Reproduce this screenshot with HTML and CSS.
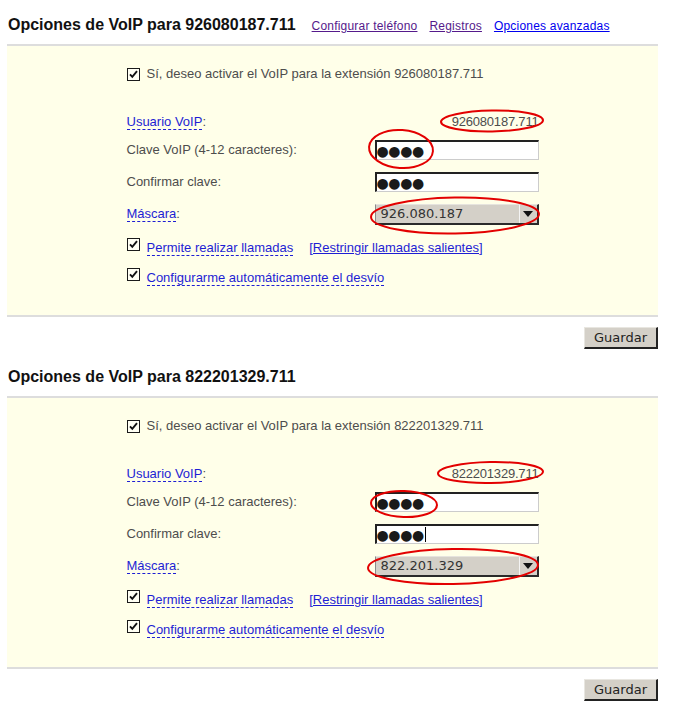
FILE: index.html
```html
<!DOCTYPE html>
<html lang="es">
<head>
<meta charset="utf-8">
<title>Opciones de VoIP</title>
<link rel="stylesheet" href="styles.css">
</head>
<body>
<div class="page">
  <section class="voip">
    <div class="head">
      <h2 class="title">Opciones de VoIP para 926080187.711</h2>
      <nav class="head-links">
        <a class="visited" href="#">Configurar teléfono</a>
        <a class="visited" href="#">Registros</a>
        <a href="#">Opciones avanzadas</a>
      </nav>
    </div>
    <div class="box">
      <div class="form">
        <div class="check-row first">
          <span class="cb"><svg width="13" height="13" viewBox="0 0 13 13"><rect x="0.5" y="0.5" width="12" height="12" fill="#fffff4" stroke="#1a1a1a"/><polyline points="3,6.3 5.3,8.8 10,3.2" fill="none" stroke="#111" stroke-width="1.9"/></svg></span>
          <span class="gray">Sí, deseo activar el VoIP para la extensión 926080187.711</span>
        </div>
        <div class="row r-user"><span><span class="help">Usuario VoIP</span><span class="gray">:</span></span><span class="gray value">926080187.711</span></div>
        <div class="row r-pass"><span class="gray">Clave VoIP (4-12 caracteres):</span><div class="field"><span class="dots">●●●●</span></div></div>
        <div class="row r-conf"><span class="gray">Confirmar clave:</span><div class="field"><span class="dots">●●●●</span></div></div>
        <div class="row r-mask"><span><span class="help">Máscara</span><span class="gray">:</span></span><div class="select"><span class="sel-text">926.080.187</span><span class="sel-btn"><span class="tri"></span></span></div></div>
        <div class="opt-row r-call">
          <span class="cb"><svg width="13" height="13" viewBox="0 0 13 13"><rect x="0.5" y="0.5" width="12" height="12" fill="#fffff4" stroke="#1a1a1a"/><polyline points="3,6.3 5.3,8.8 10,3.2" fill="none" stroke="#111" stroke-width="1.9"/></svg></span>
          <span class="opt-text"><span class="help">Permite realizar llamadas</span></span>
          <span class="opt-text"><a class="restrict" href="#">[Restringir llamadas salientes]</a></span>
        </div>
        <div class="opt-row r-fwd">
          <span class="cb"><svg width="13" height="13" viewBox="0 0 13 13"><rect x="0.5" y="0.5" width="12" height="12" fill="#fffff4" stroke="#1a1a1a"/><polyline points="3,6.3 5.3,8.8 10,3.2" fill="none" stroke="#111" stroke-width="1.9"/></svg></span>
          <span class="opt-text"><span class="help">Configurarme automáticamente el desvío</span></span>
        </div>
      </div>
    </div>
    <div class="actions"><button class="save" type="button">Guardar</button></div>
  </section>

  <section class="voip second">
    <div class="head">
      <h2 class="title">Opciones de VoIP para 822201329.711</h2>
    </div>
    <div class="box">
      <div class="form">
        <div class="check-row first">
          <span class="cb"><svg width="13" height="13" viewBox="0 0 13 13"><rect x="0.5" y="0.5" width="12" height="12" fill="#fffff4" stroke="#1a1a1a"/><polyline points="3,6.3 5.3,8.8 10,3.2" fill="none" stroke="#111" stroke-width="1.9"/></svg></span>
          <span class="gray">Sí, deseo activar el VoIP para la extensión 822201329.711</span>
        </div>
        <div class="row r-user"><span><span class="help">Usuario VoIP</span><span class="gray">:</span></span><span class="gray value">822201329.711</span></div>
        <div class="row r-pass"><span class="gray">Clave VoIP (4-12 caracteres):</span><div class="field"><span class="dots">●●●●</span></div></div>
        <div class="row r-conf"><span class="gray">Confirmar clave:</span><div class="field"><span class="dots">●●●●</span><span class="caret"></span></div></div>
        <div class="row r-mask"><span><span class="help">Máscara</span><span class="gray">:</span></span><div class="select"><span class="sel-text">822.201.329</span><span class="sel-btn"><span class="tri"></span></span></div></div>
        <div class="opt-row r-call">
          <span class="cb"><svg width="13" height="13" viewBox="0 0 13 13"><rect x="0.5" y="0.5" width="12" height="12" fill="#fffff4" stroke="#1a1a1a"/><polyline points="3,6.3 5.3,8.8 10,3.2" fill="none" stroke="#111" stroke-width="1.9"/></svg></span>
          <span class="opt-text"><span class="help">Permite realizar llamadas</span></span>
          <span class="opt-text"><a class="restrict" href="#">[Restringir llamadas salientes]</a></span>
        </div>
        <div class="opt-row r-fwd">
          <span class="cb"><svg width="13" height="13" viewBox="0 0 13 13"><rect x="0.5" y="0.5" width="12" height="12" fill="#fffff4" stroke="#1a1a1a"/><polyline points="3,6.3 5.3,8.8 10,3.2" fill="none" stroke="#111" stroke-width="1.9"/></svg></span>
          <span class="opt-text"><span class="help">Configurarme automáticamente el desvío</span></span>
        </div>
      </div>
    </div>
    <div class="actions"><button class="save" type="button">Guardar</button></div>
  </section>

  <svg class="marks" width="682" height="711" viewBox="0 0 682 711">
    <g fill="none" stroke="#e30000" stroke-width="2">
      <ellipse cx="492" cy="121" rx="51" ry="10.5" transform="rotate(-1 492 121)"/>
      <ellipse cx="401" cy="149" rx="32" ry="19" transform="rotate(4 401 149)"/>
      <ellipse cx="455" cy="215.5" rx="84" ry="18" transform="rotate(-1 455 215.5)"/>
      <ellipse cx="490.5" cy="472.5" rx="52.5" ry="10.5" transform="rotate(-1 490.5 472.5)"/>
      <ellipse cx="404" cy="504" rx="33" ry="13" transform="rotate(2 404 504)"/>
      <ellipse cx="453" cy="566.5" rx="85" ry="17.5" transform="rotate(-1 453 566.5)"/>
    </g>
  </svg>
</div>
</body>
</html>
```

FILE: styles.css
```css
html, body {
  margin: 0;
  padding: 0;
  background: #ffffff;
}

.page {
  position: relative;
  width: 651px;
  padding: 15px 0 0 7px;
  font-family: "Liberation Sans", Arial, sans-serif;
  font-size: 13px;
  color: #4a4a4a;
}

.voip + .voip {
  margin-top: 18px;
}

.head {
  display: flex;
  align-items: baseline;
  height: 20px;
  margin-bottom: 9px;
}

.title {
  margin: 0;
  font-size: 16px;
  line-height: 20px;
  font-weight: bold;
  color: #111111;
  padding-left: 1px;
}

.head-links {
  display: flex;
  gap: 12px;
  margin-left: 16px;
  font-size: 12px;
  letter-spacing: 0.2px;
}

.head-links a {
  color: #0000ee;
  text-decoration: underline;
}

.head-links a.visited {
  color: #551a8b;
}

.box {
  background: #ffffe9;
  border-top: 2px solid #dddddd;
  border-bottom: 2px solid #dddddd;
  padding: 20px 0 28px;
}

.form {
  width: 412px;
  margin: 0 auto;
}

.gray {
  color: #4d4d4d;
}

.help {
  color: #1e1ed4;
  border-bottom: 1px dashed #1e1ed4;
}

.check-row {
  display: flex;
  align-items: center;
  height: 16px;
  line-height: 16px;
}

.cb {
  display: flex;
  flex: none;
  width: 13px;
  height: 13px;
  margin-right: 7px;
}

.cb svg {
  display: block;
}

.opt-row {
  display: flex;
  align-items: flex-start;
  height: 19px;
  line-height: 16px;
}

.opt-text {
  padding-top: 2px;
}

.row {
  display: flex;
  justify-content: space-between;
  align-items: center;
  height: 20px;
  line-height: 16px;
}

.r-user { margin-top: 30px; }
.r-pass { margin-top: 8px; }
.r-conf { margin-top: 12px; }
.r-mask { margin-top: 12px; }
.r-call { margin-top: 14px; }
.r-fwd { margin-top: 11px; }

.value {
  letter-spacing: -0.2px;
}

.field {
  box-sizing: border-box;
  width: 164px;
  height: 20px;
  background: #ffffff;
  border-top: 2px solid #222222;
  border-left: 2px solid #222222;
  border-right: 1px solid #cccccc;
  border-bottom: 1px solid #cccccc;
  display: flex;
  align-items: center;
}

.dots {
  font-family: "DejaVu Sans", sans-serif;
  font-size: 14px;
  line-height: 16px;
  color: #1a1a1a;
  letter-spacing: -0.4px;
}

.caret {
  display: block;
  width: 1px;
  height: 15px;
  background: #000000;
  margin-left: 1px;
}

.select {
  box-sizing: border-box;
  width: 164px;
  height: 21px;
  background: #d4d0c8;
  border-top: 1px solid #e6e4de;
  border-left: 1px solid #8a8a8a;
  border-right: 2px solid #2a2a2a;
  border-bottom: 2px solid #2a2a2a;
  display: flex;
  align-items: center;
}

.sel-text {
  flex: 1;
  padding-left: 5px;
  font-family: "DejaVu Sans", sans-serif;
  font-size: 13px;
  color: #333333;
}

.sel-btn {
  box-sizing: border-box;
  width: 18px;
  height: 100%;
  border-left: 1px solid #f4f4f4;
  display: flex;
  align-items: center;
  justify-content: center;
}

.tri {
  width: 0;
  height: 0;
  border-left: 5px solid transparent;
  border-right: 5px solid transparent;
  border-top: 6px solid #111111;
}

.restrict {
  display: inline-block;
  margin-left: 16px;
  color: #1e1ed4;
  text-decoration: underline;
}

.actions {
  display: flex;
  justify-content: flex-end;
  margin-top: 10px;
}

.save {
  box-sizing: border-box;
  width: 74px;
  height: 22px;
  margin: 0;
  padding: 0 0 1px;
  background: #d4d0c8;
  border: none;
  border-right: 2px solid #222222;
  border-bottom: 2px solid #222222;
  border-top: 1px solid #e8e6e0;
  border-left: 1px solid #e8e6e0;
  font-family: "DejaVu Sans", sans-serif;
  font-size: 13px;
  color: #222222;
}

.marks {
  position: absolute;
  left: 0;
  top: 0;
  pointer-events: none;
}
```
